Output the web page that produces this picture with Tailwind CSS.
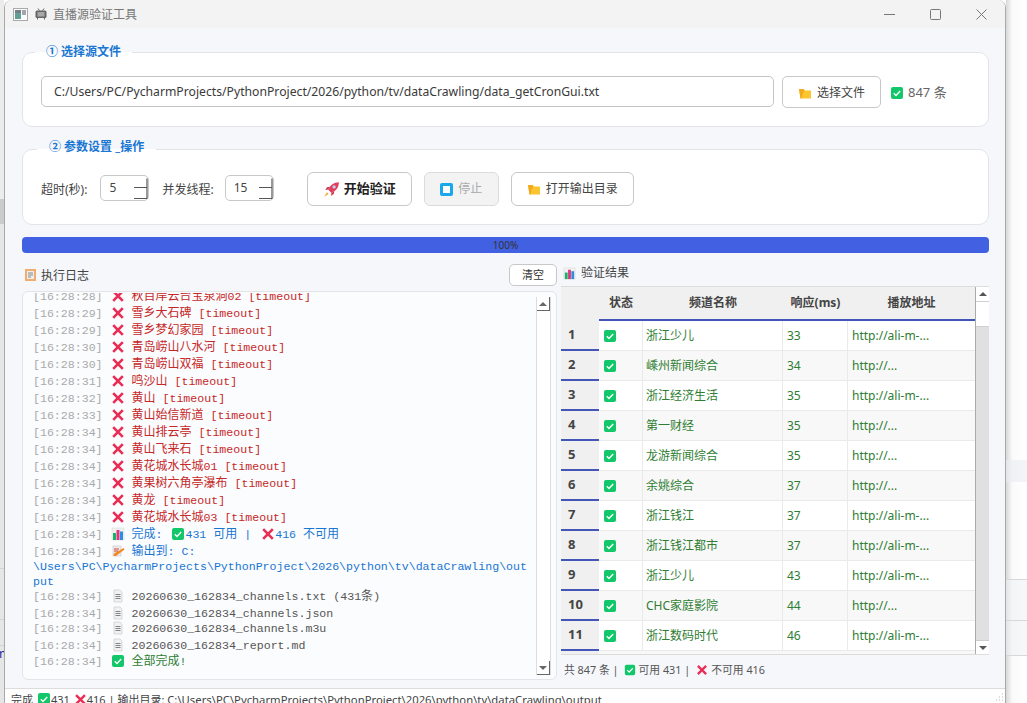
<!DOCTYPE html>
<html lang="en">
<head>
  <meta charset="UTF-8">
  <title>直播源验证工具</title>
  <script src="https://cdn.jsdelivr.net/npm/@tailwindcss/browser@4"></script>
</head>
<body class="w-[1027px] h-[703px] overflow-hidden bg-white flex text-[12px] text-[#333] font-['Noto_Sans','Noto_Sans_CJK_SC',sans-serif]">

  <!-- icons used more than once -->
  <svg class="hidden">
    <symbol id="chk" viewBox="0 0 14 14">
      <rect x="1" y="1" width="12" height="12" rx="2" fill="#12c76a"/>
      <path d="M3.8 7.2l2.2 2.2 4.2-4.4" fill="none" stroke="#fff" stroke-width="1.4"/>
    </symbol>
    <symbol id="cross" viewBox="0 0 14 14">
      <path d="M2.2 2.2l9.6 9.6M11.8 2.2l-9.6 9.6" fill="none" stroke="#ea2d55" stroke-width="2.6"/>
    </symbol>
    <symbol id="folder" viewBox="0 0 14 14">
      <path d="M1 3h4.500l1.500 1.500h6v8H2.500z" fill="#fbc52f"/>
      <path d="M1 3h4.500l1 1.500L5 6.500 3.500 12.500H2.500z" fill="#f2a81f"/>
    </symbol>
    <symbol id="doc" viewBox="0 0 14 14">
      <path d="M3 1h6l2 2v10H3z" fill="#f1f1f1" stroke="#c4c4c4" stroke-width=".6"/>
      <path d="M4.500 5.500h5M4.500 7.500h5M4.500 9.500h5" stroke="#777" stroke-width=".9"/>
    </symbol>
    <symbol id="chart" viewBox="0 0 14 14">
      <rect x="1" y="1" width="12" height="12" fill="#f1f1f1" stroke="#d4d4d4" stroke-width=".5"/>
      <rect x="2" y="6" width="3" height="7" fill="#19b26b"/>
      <rect x="5.500" y="3" width="3" height="10" fill="#e0357a"/>
      <rect x="9" y="4.500" width="3" height="8.500" fill="#2a8fe0"/>
    </symbol>
    <symbol id="spin" viewBox="0 0 15 22">
      <path d="M1 10.500h13.500M1 21.500h13.500M14 1.500v20" fill="none" stroke="#555" stroke-width="1.200"/>
    </symbol>
  </svg>

  <!-- desktop showing at left of the window -->
  <div class="w-[4px] shrink-0 flex flex-col bg-[#e6e6e6] overflow-hidden">
    <div class="h-[199px] bg-[#ececec]"></div>
    <div class="h-[25px] bg-[#cbcbcb]"></div>
    <div class="h-[344px]"></div>
    <div class="h-[51px] border-t border-[#d4d4d4]"></div>
    <div class="h-[26px] border-t border-[#d4d4d4]"></div>
    <div class="h-[20px] border-t border-[#d4d4d4] text-[#2a1e9c] text-[12px] leading-[16px] -indent-[5px]">m</div>
  </div>

  <!-- window -->
  <div class="w-[1002px] shrink-0 h-[703px] flex flex-col bg-[#f5f7fb] border-x border-[#a9a9a9] rounded-t-[8px] overflow-hidden">
    <div class="h-[28px] shrink-0 bg-[#f3f3f3] flex items-center text-[#777]">
      <svg class="ml-[8px] w-[15px] h-[13px] opacity-80" viewBox="0 0 15 13">
        <rect x=".5" y=".5" width="14" height="12" fill="#fff" stroke="#999"/>
        <rect x="2" y="2" width="6" height="9" fill="#3d8a80"/>
        <rect x="2" y="2" width="6" height="3" fill="#56606a"/>
        <rect x="9" y="2" width="4" height="5" fill="#8b939b"/>
      </svg>
      <svg class="ml-[7px] w-[12px] h-[12px]" viewBox="0 0 12 12">
        <rect x=".5" y="2.500" width="11" height="7.500" rx="1.500" fill="#666"/>
        <rect x="2.500" y="4" width="7" height="4.500" fill="#a8a8a8"/>
        <path d="M3 .5l1.500 2M9 .5l-1.500 2M2.500 10v1.500M9.500 10v1.500" stroke="#666"/>
      </svg>
      <span class="ml-[6px] pt-[1px]">直播源验证工具</span>
      <div class="ml-auto flex items-center mr-[18px] gap-[35px]">
        <svg class="w-[11px] h-[11px]" viewBox="0 0 11 11"><path d="M0 5.500h11" stroke="#777"/></svg>
        <svg class="w-[11px] h-[11px]" viewBox="0 0 11 11"><rect x=".5" y=".5" width="10" height="10" rx="1" fill="none" stroke="#777"/></svg>
        <svg class="w-[11px] h-[11px]" viewBox="0 0 11 11"><path d="M.5.5l10 10M10.500.5l-10 10" stroke="#777"/></svg>
      </div>
    </div>

    <div class="flex-1 min-h-0 pl-[17px] pr-[16px] pt-[24px] flex flex-col">
      <!-- group 1 -->
      <div class="relative h-[75px] shrink-0 bg-white border border-[#e2e4e8] rounded-[10px] pl-[18px] pr-[41px] pt-[23px] flex items-start">
        <div class="absolute left-[12px] -top-[10px] px-[11px] h-[18px] leading-[18px] bg-linear-to-b from-[#f5f7fb] from-50% to-white to-50% text-[#1976d2] font-bold">① 选择源文件</div>
        <div class="w-[733px] h-[31px] border border-[#c4c4c4] rounded-[5px] pl-[12px] pt-[1px] flex items-center text-[12.200px] text-[#3a3a3a] whitespace-nowrap">C:/Users/PC/PycharmProjects/PythonProject/2026/python/tv/dataCrawling/data_getCronGui.txt</div>
        <button class="ml-[8px] w-[99px] h-[32px] border border-[#c8c8c8] rounded-[5px] pt-[1px] flex items-center justify-center gap-[5px] text-[#444]">
          <svg class="w-[14px] h-[14px]"><use href="#folder"/></svg>选择文件
        </button>
        <svg class="ml-[9px] mt-[10px] w-[14px] h-[14px]"><use href="#chk"/></svg>
        <span class="ml-[4px] mt-[7px] text-[13px] text-[#666]">847 条</span>
      </div>

      <!-- group 2 -->
      <div class="relative h-[76px] mt-[22px] shrink-0 bg-white border border-[#e2e4e8] rounded-[10px] pl-[18px] pt-[4px] flex items-center">
        <div class="absolute left-[14px] -top-[12px] px-[12px] h-[18px] leading-[18px] bg-linear-to-b from-[#f5f7fb] from-60% to-white to-60% text-[#1976d2] font-bold">② 参数设置 _操作</div>
        <span class="text-[#444] pt-[1px]">超时(秒):</span>
        <div class="ml-[13px] -mt-[2px] w-[49px] h-[26px] border border-[#c8c8c8] rounded-[5px] flex items-center pl-[8px] text-[#444] relative">5
          <svg class="absolute right-0 top-0 w-[15px] h-[22px] mt-[1px]"><use href="#spin"/></svg>
        </div>
        <span class="ml-[13px] text-[#444] pt-[1px]">并发线程:</span>
        <div class="ml-[11px] -mt-[2px] w-[49px] h-[26px] border border-[#c8c8c8] rounded-[5px] flex items-center pl-[8px] text-[#444] relative">15
          <svg class="absolute right-0 top-0 w-[15px] h-[22px] mt-[1px]"><use href="#spin"/></svg>
        </div>
        <button class="ml-[33px] w-[105px] h-[34px] border border-[#c8c8c8] rounded-[6px] flex items-center justify-center gap-[4px] font-bold text-[13px] text-[#222]">
          <svg class="w-[17px] h-[17px]" viewBox="0 0 15 15">
            <path d="M14 1C9.500 1 6.500 3.500 4.500 7.500l3 3c4-2 6.500-5 6.500-9.500z" fill="#e0405e"/>
            <circle cx="9.800" cy="5.200" r="1.500" fill="#bcd3ee"/>
            <path d="M4.500 7.500L2 8l1.500-2.500L6 5zM7.500 10.500L7 13l2.500-1.500L10 9z" fill="#c73552"/>
            <path d="M3.500 10l-2.500 4 4-2.500z" fill="#f7a531"/>
          </svg>开始验证
        </button>
        <button class="ml-[12px] w-[75px] h-[34px] bg-[#f3f3f3] border border-[#dcdcdc] rounded-[6px] flex items-center justify-center gap-[5px] text-[#aaa]">
          <svg class="w-[13px] h-[13px]" viewBox="0 0 13 13"><rect width="13" height="13" rx="2" fill="#1aa7ec"/><rect x="3" y="3" width="7" height="7" fill="#fff"/></svg>停止
        </button>
        <button class="ml-[12px] w-[123px] h-[34px] border border-[#c8c8c8] rounded-[6px] flex items-center justify-center gap-[5px] text-[#444]">
          <svg class="w-[14px] h-[14px]"><use href="#folder"/></svg>打开输出目录
        </button>
      </div>

      <!-- progress -->
      <div class="h-[16px] mt-[12px] shrink-0 bg-[#4160e2] rounded-[4px] flex items-center justify-center text-[10px] text-[#333]">100%</div>

      <!-- log and results -->
      <div class="flex gap-[4px] flex-1 min-h-0">
        <div class="w-[535px] shrink-0 pt-[11px]">
          <div class="h-[22px] flex items-center pl-[3px] text-[#444]">
            <svg class="w-[11px] h-[14px] mr-[5px]" viewBox="0 0 11 14">
              <rect x="0" y="1" width="11" height="12" fill="#f0ad6e"/>
              <rect x="2" y="3" width="7" height="8" fill="#eee"/>
              <path d="M3 5h5M3 7h5M3 9h3" stroke="#888"/>
            </svg><span class="pt-[1px]">执行日志</span>
            <button class="ml-auto w-[48px] h-[22px] bg-white border border-[#c8c8c8] rounded-[5px] text-[11px] text-[#333]">清空</button>
          </div>
          <div class="mt-[5px] h-[389px] bg-[#fbfcfe] border border-[#e2e4e8] rounded-[6px] flex overflow-hidden">
            <div class="flex-1 min-w-0 mt-[1px] overflow-hidden pl-[10px] font-['Liberation_Mono','Noto_Sans_CJK_SC',monospace] text-[11.600px] leading-[17px] whitespace-nowrap text-[#c62828] [&>div]:h-[17px] [&_b]:font-normal [&_b]:text-[12px] [&_i]:text-[#aaa] [&_i]:not-italic [&_svg]:inline [&_svg]:w-[14px] [&_svg]:h-[14px] [&_svg]:align-[-3px] [&_svg]:ml-[1px]">
              <div class="-mt-[5px]"><i>[16:28:28]</i> <svg><use href="#cross"/></svg> <b>秋百岸云台宝泉洞</b>02 [timeout]</div>
              <div><i>[16:28:29]</i> <svg><use href="#cross"/></svg> <b>雪乡大石碑</b> [timeout]</div>
              <div><i>[16:28:29]</i> <svg><use href="#cross"/></svg> <b>雪乡梦幻家园</b> [timeout]</div>
              <div><i>[16:28:30]</i> <svg><use href="#cross"/></svg> <b>青岛崂山八水河</b> [timeout]</div>
              <div><i>[16:28:30]</i> <svg><use href="#cross"/></svg> <b>青岛崂山双福</b> [timeout]</div>
              <div><i>[16:28:31]</i> <svg><use href="#cross"/></svg> <b>鸣沙山</b> [timeout]</div>
              <div><i>[16:28:32]</i> <svg><use href="#cross"/></svg> <b>黄山</b> [timeout]</div>
              <div><i>[16:28:33]</i> <svg><use href="#cross"/></svg> <b>黄山始信新道</b> [timeout]</div>
              <div><i>[16:28:34]</i> <svg><use href="#cross"/></svg> <b>黄山排云亭</b> [timeout]</div>
              <div><i>[16:28:34]</i> <svg><use href="#cross"/></svg> <b>黄山飞来石</b> [timeout]</div>
              <div><i>[16:28:34]</i> <svg><use href="#cross"/></svg> <b>黄花城水长城</b>01 [timeout]</div>
              <div><i>[16:28:34]</i> <svg><use href="#cross"/></svg> <b>黄果树六角亭瀑布</b> [timeout]</div>
              <div><i>[16:28:34]</i> <svg><use href="#cross"/></svg> <b>黄龙</b> [timeout]</div>
              <div><i>[16:28:34]</i> <svg><use href="#cross"/></svg> <b>黄花城水长城</b>03 [timeout]</div>
              <div class="text-[#1976d2]"><i>[16:28:34]</i> <svg><use href="#chart"/></svg> <b>完成</b>: <svg class="!ml-[2px]"><use href="#chk"/></svg>431 <b>可用</b> | <svg class="!ml-[3px]"><use href="#cross"/></svg>416 <b>不可用</b></div>
              <div class="text-[#1976d2]"><i>[16:28:34]</i> <svg viewBox="0 0 14 14"><path d="M2 2h8v10H2z" fill="#eee" stroke="#bbb" stroke-width=".5"/><path d="M3 9.500L12.500 4l1 1.500L5 12H2.500z" fill="#f08a24"/><path d="M3 5h5M3 7h4" stroke="#d0413a"/></svg> <b>输出到</b>: C:</div>
              <div class="!h-[29px] leading-[15px] -mt-[1px] text-[#1976d2]">\Users\PC\PycharmProjects\PythonProject\2026\python\tv\dataCrawling\out<br>put</div>
              <div class="text-[#555]"><i>[16:28:34]</i> <svg><use href="#doc"/></svg> 20260630_162834_channels.txt (431<b>条</b>)</div>
              <div class="text-[#555]"><i>[16:28:34]</i> <svg><use href="#doc"/></svg> 20260630_162834_channels.json</div>
              <div class="-mt-[2px] text-[#555]"><i>[16:28:34]</i> <svg><use href="#doc"/></svg> 20260630_162834_channels.m3u</div>
              <div class="text-[#555]"><i>[16:28:34]</i> <svg><use href="#doc"/></svg> 20260630_162834_report.md</div>
              <div class="-mt-[1px] text-[#2e7d32]"><i>[16:28:34]</i> <svg><use href="#chk"/></svg> <b>全部完成</b>!</div>
            </div>
            <div class="w-[15px] mr-[5px] mt-[5px] mb-[4px] shrink-0 bg-white border-x border-[#dcdcdc] flex flex-col justify-between">
              <div class="h-[14px] border-r border-b border-[#666] flex items-center justify-center"><span class="border-x-[4px] border-x-transparent border-b-[4px] border-b-[#666]"></span></div>
              <div class="h-[14px] border-r border-b border-[#666] flex items-center justify-center"><span class="border-x-[4px] border-x-transparent border-t-[4px] border-t-[#666]"></span></div>
            </div>
          </div>
        </div>

        <div class="w-[428px] shrink-0 pt-[11px]">
          <div class="h-[18px] flex items-center pl-[2px] text-[#444]">
            <svg class="w-[13px] h-[13px] mr-[5px]"><use href="#chart"/></svg>验证结果
          </div>
          <div class="mt-[4px] h-[369px] flex border-t border-b border-[#dcdcdc] overflow-hidden bg-white">
            <div class="flex-1 min-w-0">
              <div class="flex h-[34px] bg-[#f0f0f0] font-bold text-[#444] items-center">
                <div class="w-[38px] self-stretch"></div>
                <div class="w-[44px] self-stretch flex items-center justify-center border-b-2 border-[#4356b8]">状态</div>
                <div class="w-[140px] self-stretch flex items-center justify-center border-b-2 border-[#4356b8]">频道名称</div>
                <div class="w-[65px] self-stretch flex items-center justify-center border-b-2 border-[#4356b8]">响应(ms)</div>
                <div class="flex-1 self-stretch flex items-center justify-center border-b-2 border-[#4356b8]">播放地址</div>
              </div>

              <div class="flex h-[30px] text-[#2e7d32]"><div class="w-[38px] bg-[#f0f0f0] border-b-2 border-[#4356b8] flex items-center pl-[7px] font-bold text-[13px] text-[#444]">1</div><div class="w-[44px] border-b border-r border-[#eaeaea] flex items-center pl-[4px]"><svg class="w-[14px] h-[14px]"><use href="#chk"/></svg></div><div class="w-[140px] border-b border-r border-[#eaeaea] flex items-center pl-[3px]">浙江少儿</div><div class="w-[65px] border-b border-r border-[#eaeaea] flex items-center pl-[4px]">33</div><div class="flex-1 border-b border-[#eaeaea] flex items-center pl-[4px]">http://ali-m-...</div></div>
              <div class="flex h-[30px] text-[#2e7d32] bg-[#f8f8f8]"><div class="w-[38px] bg-[#f0f0f0] border-b-2 border-[#4356b8] flex items-center pl-[7px] font-bold text-[13px] text-[#444]">2</div><div class="w-[44px] border-b border-r border-[#eaeaea] flex items-center pl-[4px]"><svg class="w-[14px] h-[14px]"><use href="#chk"/></svg></div><div class="w-[140px] border-b border-r border-[#eaeaea] flex items-center pl-[3px]">嵊州新闻综合</div><div class="w-[65px] border-b border-r border-[#eaeaea] flex items-center pl-[4px]">34</div><div class="flex-1 border-b border-[#eaeaea] flex items-center pl-[4px]">http://...</div></div>
              <div class="flex h-[30px] text-[#2e7d32]"><div class="w-[38px] bg-[#f0f0f0] border-b-2 border-[#4356b8] flex items-center pl-[7px] font-bold text-[13px] text-[#444]">3</div><div class="w-[44px] border-b border-r border-[#eaeaea] flex items-center pl-[4px]"><svg class="w-[14px] h-[14px]"><use href="#chk"/></svg></div><div class="w-[140px] border-b border-r border-[#eaeaea] flex items-center pl-[3px]">浙江经济生活</div><div class="w-[65px] border-b border-r border-[#eaeaea] flex items-center pl-[4px]">35</div><div class="flex-1 border-b border-[#eaeaea] flex items-center pl-[4px]">http://ali-m-...</div></div>
              <div class="flex h-[30px] text-[#2e7d32] bg-[#f8f8f8]"><div class="w-[38px] bg-[#f0f0f0] border-b-2 border-[#4356b8] flex items-center pl-[7px] font-bold text-[13px] text-[#444]">4</div><div class="w-[44px] border-b border-r border-[#eaeaea] flex items-center pl-[4px]"><svg class="w-[14px] h-[14px]"><use href="#chk"/></svg></div><div class="w-[140px] border-b border-r border-[#eaeaea] flex items-center pl-[3px]">第一财经</div><div class="w-[65px] border-b border-r border-[#eaeaea] flex items-center pl-[4px]">35</div><div class="flex-1 border-b border-[#eaeaea] flex items-center pl-[4px]">http://...</div></div>
              <div class="flex h-[30px] text-[#2e7d32]"><div class="w-[38px] bg-[#f0f0f0] border-b-2 border-[#4356b8] flex items-center pl-[7px] font-bold text-[13px] text-[#444]">5</div><div class="w-[44px] border-b border-r border-[#eaeaea] flex items-center pl-[4px]"><svg class="w-[14px] h-[14px]"><use href="#chk"/></svg></div><div class="w-[140px] border-b border-r border-[#eaeaea] flex items-center pl-[3px]">龙游新闻综合</div><div class="w-[65px] border-b border-r border-[#eaeaea] flex items-center pl-[4px]">35</div><div class="flex-1 border-b border-[#eaeaea] flex items-center pl-[4px]">http://...</div></div>
              <div class="flex h-[30px] text-[#2e7d32] bg-[#f8f8f8]"><div class="w-[38px] bg-[#f0f0f0] border-b-2 border-[#4356b8] flex items-center pl-[7px] font-bold text-[13px] text-[#444]">6</div><div class="w-[44px] border-b border-r border-[#eaeaea] flex items-center pl-[4px]"><svg class="w-[14px] h-[14px]"><use href="#chk"/></svg></div><div class="w-[140px] border-b border-r border-[#eaeaea] flex items-center pl-[3px]">余姚综合</div><div class="w-[65px] border-b border-r border-[#eaeaea] flex items-center pl-[4px]">37</div><div class="flex-1 border-b border-[#eaeaea] flex items-center pl-[4px]">http://...</div></div>
              <div class="flex h-[30px] text-[#2e7d32]"><div class="w-[38px] bg-[#f0f0f0] border-b-2 border-[#4356b8] flex items-center pl-[7px] font-bold text-[13px] text-[#444]">7</div><div class="w-[44px] border-b border-r border-[#eaeaea] flex items-center pl-[4px]"><svg class="w-[14px] h-[14px]"><use href="#chk"/></svg></div><div class="w-[140px] border-b border-r border-[#eaeaea] flex items-center pl-[3px]">浙江钱江</div><div class="w-[65px] border-b border-r border-[#eaeaea] flex items-center pl-[4px]">37</div><div class="flex-1 border-b border-[#eaeaea] flex items-center pl-[4px]">http://ali-m-...</div></div>
              <div class="flex h-[30px] text-[#2e7d32] bg-[#f8f8f8]"><div class="w-[38px] bg-[#f0f0f0] border-b-2 border-[#4356b8] flex items-center pl-[7px] font-bold text-[13px] text-[#444]">8</div><div class="w-[44px] border-b border-r border-[#eaeaea] flex items-center pl-[4px]"><svg class="w-[14px] h-[14px]"><use href="#chk"/></svg></div><div class="w-[140px] border-b border-r border-[#eaeaea] flex items-center pl-[3px]">浙江钱江都市</div><div class="w-[65px] border-b border-r border-[#eaeaea] flex items-center pl-[4px]">37</div><div class="flex-1 border-b border-[#eaeaea] flex items-center pl-[4px]">http://ali-m-...</div></div>
              <div class="flex h-[30px] text-[#2e7d32]"><div class="w-[38px] bg-[#f0f0f0] border-b-2 border-[#4356b8] flex items-center pl-[7px] font-bold text-[13px] text-[#444]">9</div><div class="w-[44px] border-b border-r border-[#eaeaea] flex items-center pl-[4px]"><svg class="w-[14px] h-[14px]"><use href="#chk"/></svg></div><div class="w-[140px] border-b border-r border-[#eaeaea] flex items-center pl-[3px]">浙江少儿</div><div class="w-[65px] border-b border-r border-[#eaeaea] flex items-center pl-[4px]">43</div><div class="flex-1 border-b border-[#eaeaea] flex items-center pl-[4px]">http://ali-m-...</div></div>
              <div class="flex h-[30px] text-[#2e7d32] bg-[#f8f8f8]"><div class="w-[38px] bg-[#f0f0f0] border-b-2 border-[#4356b8] flex items-center pl-[7px] font-bold text-[13px] text-[#444]">10</div><div class="w-[44px] border-b border-r border-[#eaeaea] flex items-center pl-[4px]"><svg class="w-[14px] h-[14px]"><use href="#chk"/></svg></div><div class="w-[140px] border-b border-r border-[#eaeaea] flex items-center pl-[3px]">CHC家庭影院</div><div class="w-[65px] border-b border-r border-[#eaeaea] flex items-center pl-[4px]">44</div><div class="flex-1 border-b border-[#eaeaea] flex items-center pl-[4px]">http://...</div></div>
              <div class="flex h-[30px] text-[#2e7d32]"><div class="w-[38px] bg-[#f0f0f0] border-b-2 border-[#4356b8] flex items-center pl-[7px] font-bold text-[13px] text-[#444]">11</div><div class="w-[44px] border-b border-r border-[#eaeaea] flex items-center pl-[4px]"><svg class="w-[14px] h-[14px]"><use href="#chk"/></svg></div><div class="w-[140px] border-b border-r border-[#eaeaea] flex items-center pl-[3px]">浙江数码时代</div><div class="w-[65px] border-b border-r border-[#eaeaea] flex items-center pl-[4px]">46</div><div class="flex-1 border-b border-[#eaeaea] flex items-center pl-[4px]">http://ali-m-...</div></div>
              <div class="flex h-[6px] bg-[#f8f8f8]"><div class="w-[38px] bg-[#f0f0f0]"></div></div>
            </div>
            <div class="w-[14px] shrink-0 bg-[#e0e0e0] border-l border-[#aaa] flex flex-col">
              <div class="h-[14px] bg-white flex items-center justify-center"><span class="border-x-[4px] border-x-transparent border-b-[4px] border-b-[#555]"></span></div>
              <div class="h-[26px] bg-white border-t border-b border-[#d0d0d0]"></div>
              <div class="flex-1"></div>
              <div class="h-[14px] bg-white border-t border-[#ccc] flex items-center justify-center"><span class="border-x-[4px] border-x-transparent border-t-[4px] border-t-[#555]"></span></div>
            </div>
          </div>
          <div class="h-[30px] flex items-center pl-[3px] text-[10.800px] text-[#555]">
            共 847 条 | <svg class="w-[12px] h-[12px] ml-[5px] mr-[3px]"><use href="#chk"/></svg>可用 431 | <svg class="w-[12px] h-[12px] ml-[6px] mr-[3px]"><use href="#cross"/></svg>不可用 416
          </div>
        </div>
      </div>
    </div>

    <!-- status bar -->
    <div class="h-[15px] shrink-0 bg-white border-t border-[#dcdcdc] flex items-start pl-[6px] text-[11px] text-[#444] whitespace-pre overflow-hidden leading-[21px] relative">完成<svg class="w-[14px] h-[14px] ml-[4px] mt-[3px]"><use href="#chk"/></svg>431 <svg class="w-[13px] h-[13px] ml-[1px] mt-[4px]"><use href="#cross"/></svg>416 | 输出目录: <span class="text-[11.300px]">C:\Users\PC\PycharmProjects\PythonProject\2026\python\tv\dataCrawling\output</span>
      <svg class="absolute right-[1px] bottom-[1px] w-[9px] h-[9px]" viewBox="0 0 9 9"><path d="M7 1h1M4 4h1M7 4h1M1 7h1M4 7h1M7 7h1" stroke="#bbb"/></svg>
    </div>
  </div>

  <!-- desktop showing at right of the window -->
  <div class="flex-1 flex flex-col bg-linear-to-r from-[#d8d8d8] via-[#fafafa] via-30% to-white">
    <div class="h-[460px]"></div>
    <div class="h-[22px] bg-[#e9edf2]/60"></div>
    <div class="h-[97px]"></div>
    <div class="h-[41px] border-t border-[#d8d8d8] bg-[#eef0f2]/50"></div>
    <div class="h-[35px] border-t border-[#d8d8d8] bg-[#eef0f2]/50"></div>
    <div class="flex-1 border-t border-[#d8d8d8]"></div>
  </div>
</body>
</html>
